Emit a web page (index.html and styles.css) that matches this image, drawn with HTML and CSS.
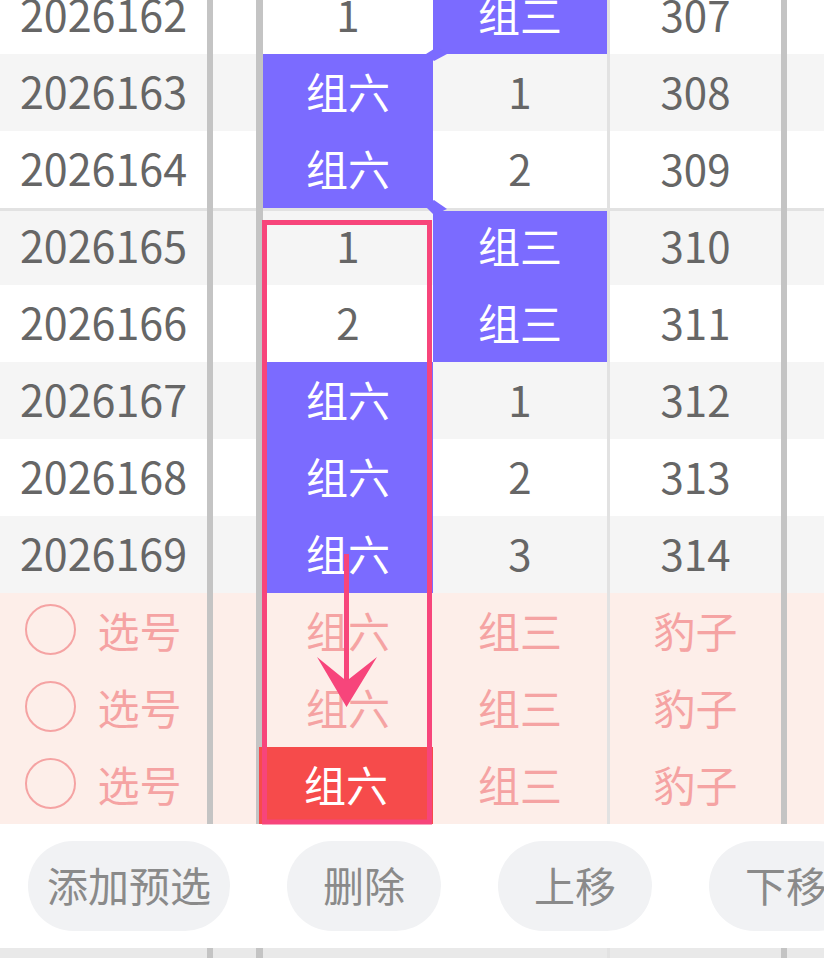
FILE: index.html
```html
<!DOCTYPE html>
<html lang="zh-CN">
<head>
<meta charset="UTF-8">
<meta name="viewport" content="width=device-width, initial-scale=1.0">
<title>走势图</title>
<link rel="stylesheet" href="styles.css">
</head>
<body>
<div class="page">
  <div class="table">
    <div class="row">
      <div class="cell c1">2026162</div><div class="cell c2"></div>
      <div class="cell c3">1</div><div class="cell c4 hit">组三</div>
      <div class="cell c5">307</div><div class="cell c6"></div>
    </div>
    <div class="row alt">
      <div class="cell c1">2026163</div><div class="cell c2"></div>
      <div class="cell c3 hit">组六</div><div class="cell c4">1</div>
      <div class="cell c5">308</div><div class="cell c6"></div>
    </div>
    <div class="row">
      <div class="cell c1">2026164</div><div class="cell c2"></div>
      <div class="cell c3 hit">组六</div><div class="cell c4">2</div>
      <div class="cell c5">309</div><div class="cell c6"></div>
    </div>
    <div class="row alt sep">
      <div class="cell c1">2026165</div><div class="cell c2"></div>
      <div class="cell c3">1</div><div class="cell c4 hit">组三</div>
      <div class="cell c5">310</div><div class="cell c6"></div>
    </div>
    <div class="row">
      <div class="cell c1">2026166</div><div class="cell c2"></div>
      <div class="cell c3">2</div><div class="cell c4 hit">组三</div>
      <div class="cell c5">311</div><div class="cell c6"></div>
    </div>
    <div class="row alt">
      <div class="cell c1">2026167</div><div class="cell c2"></div>
      <div class="cell c3 hit">组六</div><div class="cell c4">1</div>
      <div class="cell c5">312</div><div class="cell c6"></div>
    </div>
    <div class="row">
      <div class="cell c1">2026168</div><div class="cell c2"></div>
      <div class="cell c3 hit">组六</div><div class="cell c4">2</div>
      <div class="cell c5">313</div><div class="cell c6"></div>
    </div>
    <div class="row alt">
      <div class="cell c1">2026169</div><div class="cell c2"></div>
      <div class="cell c3 hit">组六</div><div class="cell c4">3</div>
      <div class="cell c5">314</div><div class="cell c6"></div>
    </div>

    <div class="row pick">
      <div class="cell c1"><span class="radio"></span>选号</div><div class="cell c2"></div>
      <div class="cell c3">组六</div><div class="cell c4">组三</div>
      <div class="cell c5">豹子</div><div class="cell c6"></div>
    </div>
    <div class="row pick">
      <div class="cell c1"><span class="radio"></span>选号</div><div class="cell c2"></div>
      <div class="cell c3">组六</div><div class="cell c4">组三</div>
      <div class="cell c5">豹子</div><div class="cell c6"></div>
    </div>
    <div class="row pick">
      <div class="cell c1"><span class="radio"></span>选号</div><div class="cell c2"></div>
      <div class="cell c3 on">组六</div><div class="cell c4">组三</div>
      <div class="cell c5">豹子</div><div class="cell c6"></div>
    </div>
  </div>

  <div class="toolbar">
    <button class="btn">添加预选</button>
    <button class="btn">删除</button>
    <button class="btn">上移</button>
    <button class="btn">下移</button>
  </div>

  <div class="row tail">
    <div class="cell c1"></div><div class="cell c2"></div>
    <div class="cell c3"></div><div class="cell c4"></div>
    <div class="cell c5"></div><div class="cell c6"></div>
  </div>

  <svg class="overlay" width="824" height="958" viewBox="0 0 824 958">
    <!-- trend joins between blocks -->
    <polygon points="426,54 437,47 447,54 434,61" fill="#7b6bff"/>
    <polygon points="425,206 434,200 447,209 434,215" fill="#7b6bff"/>
    <!-- selection frame -->
    <rect x="264.5" y="222.5" width="165" height="599.5" fill="none" stroke="#f7457b" stroke-width="5"/>
    <!-- drag arrow -->
    <line x1="346.5" y1="554" x2="346.5" y2="690" stroke="#f7457b" stroke-width="5"/>
    <polygon points="317,657 346.5,681 377,657 346.5,707" fill="#f7457b"/>
  </svg>
</div>
</body>
</html>
```

FILE: styles.css
```css
body {
  margin: 0;
  padding: 0;
  background: #fff;
  font-family: "Noto Sans CJK SC", "Noto Sans", sans-serif;
}
.page {
  position: relative;
  width: 824px;
  height: 958px;
  overflow: hidden;
}
.table {
  margin-top: -23px;
}
.row {
  display: grid;
  grid-template-columns: 213px 50px 170px 177px 177px 37px;
  background: #fff;
}
.row.alt {
  background: #f5f5f5;
}
.row.pick {
  background: #fdeee9;
}
.cell {
  box-sizing: border-box;
  height: 77px;
  padding-bottom: 5px;
  display: flex;
  align-items: center;
  justify-content: center;
  font-size: 42px;
  color: #666;
}
.c1 {
  border-right: 6px solid #c4c4c4;
  font-size: 43px;
}
.c2 {
  border-right: 7px solid #c4c4c4;
}
.c4 {
  border-right: 3px solid #e2e2e2;
}
.c5 {
  border-right: 6px solid #c4c4c4;
}
.row.sep .cell {
  box-shadow: inset 0 3px 0 #e2e2e2;
}
.cell.hit {
  background: #7b6bff;
  color: #fff;
}
.row.pick .cell {
  color: #f5a3a3;
  font-size: 42px;
}
.row.pick .cell.on {
  background: #f64b4b;
  color: #fff;
  margin-left: -4px;
}
.radio {
  box-sizing: border-box;
  width: 51px;
  height: 51px;
  border: 2.5px solid #f5a3a3;
  border-radius: 50%;
  margin-right: 21px;
}
.toolbar {
  display: flex;
  align-items: center;
  gap: 57px;
  height: 124px;
  padding-left: 28px;
  background: #fff;
}
.btn {
  flex-shrink: 0;
  height: 90px;
  min-width: 154px;
  padding: 0 19px 4px;
  border: none;
  border-radius: 45px;
  background: #f1f2f4;
  color: #8a8a8a;
  font-family: inherit;
  font-size: 41px;
}
.row.tail {
  background: #e9e9e9;
}
.row.tail .cell {
  height: 10px;
  padding: 0;
}
.overlay {
  position: absolute;
  top: 0;
  left: 0;
  pointer-events: none;
}
```
